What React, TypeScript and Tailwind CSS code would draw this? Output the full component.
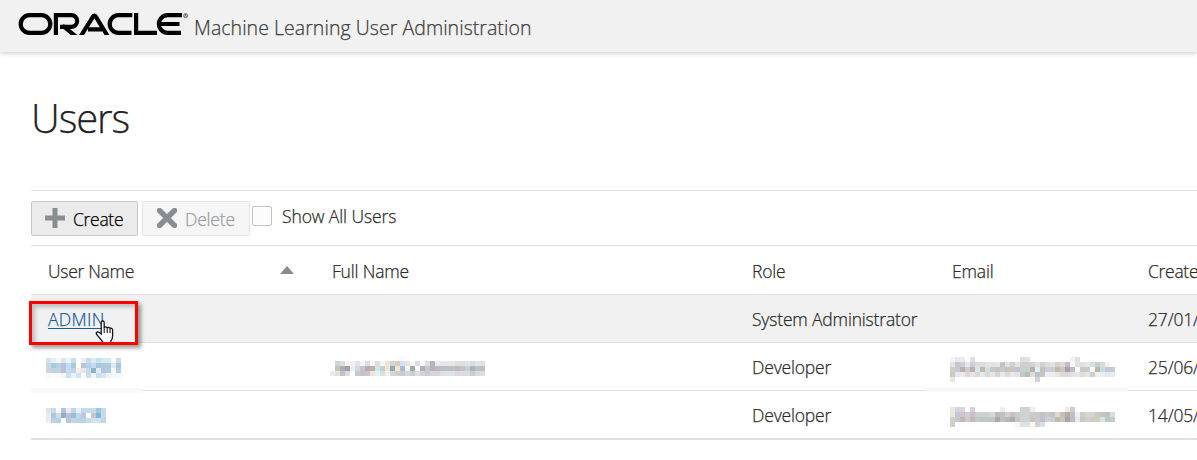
import React from "react";

const hidden = {
  userA: [
    "d8e2ea dff1fa fbf4f2 d8e6ee eaf6fa d0dde9 ffffff f0eaf0 c9dbe9 dcebf4 c4dff0 d8e8f0 d8e8f0 f8fcfc c9dde9",
    "cdd5e2 a4cbe0 b4d2e2 bdbfd8 bfdff2 a9c8dc fffff2 bfbfda b4d0e8 bfdcee a9c6dc b0c8dc b0c8dc dceaf0 a9c8de",
    "cdd3e0 c2d2e0 c0d2dc bfbfd8 bfdff2 c4d4e2 f2efeb e4e8f0 d0d8e8 8fb2d0 e4ecf2 b0c8dc b0cce0 fafafa b0cfe4",
    "f6f8fa fafcfc f8f8fa f0f6f8 cfe0ec e4f4fc d4e4ee fafcfa cadeea ecf6fa cadeea d8e4ee e8f4fa f4f8fc f4f8fc",
  ],
  userB: [
    "dce6ec c8dce6 f2fcfc b0c4da f0e8ec c2d4e2 e0f2fc c0d8e8 c8dae6 c8dae6 9cc8e0 c4dcea",
    "eaeaf2 acc8de d8dae6 88b0cc b8c0da 9cbcd4 bcd8ea c0c4dc ffffff c0c8d4 84b4d2 c4dcea",
    "eaeef2 c0d0e2 b0d2e6 ffffff bcc4da c4d4e4 b4d6ea bcd4e6 c8dcea dce0ea c8e4f2 c4d6e4",
  ],
  name: [
    "- - - - - - - - - - - - - fafcfe f4faff - - - - - - - - - - - - - - - -",
    "- ccd6d4 dddddc f5f5f5 f0f2f4 e2e4e8 f2f4fc e0dedc f4f6fa dde0e4 f4f6f6 f2e2d0 cbd7e2 d8cfb8 d0e4f4 e4e4e0 fcfcfc dedce0 fafafa e0e0e4 b9b3b8 e8eaec e4e6e8 e4e8ec e4e6e8 e0dfde e0dfde e0e4e6 d8dce0 e0e4e8 e0e0e2",
    "- c4c4b0 a6b0bb ac9ea8 ebeeee cdd9e6 c5c5c4 b4adb5 c0b09c cce5f1 c5d0d0 f2e2d0 93a6b5 f0e7ce a9bcc9 f8fafa 9ea9a8 ffffff b0b0b6 c5c8d4 b9b3b8 bbb9bd b9bfc4 b9bfc4 b9bfc4 c1bbbc c1c2c5 c9d0cf adb4c0 bec2c8 bfbfc1",
    "ebebe8 e0e0dc c2c2c5 dddbe0 - c6c9cc c5c5c4 c9c6cc efe5d9 e0f2fa dce1de f7eee6 ccd7de cecfcc c8cccf d8d8d8 c9cfcd e0e0e0 d4d4d8 c8cdd6 dbd5d7 d8d3d8 dde1e1 dfe2e2 dfe2e2 dcd8dc e0d9df d8ddd9 c8ccd2 dadade dddde0",
  ],
  emailA: [
    "f5f5f5 e9e9ed eaeaf0 - e0e0e4 - - - - - - - - - dde0dd e0e1e1 - - - - - - - - f5efee e0e0e0 - - - - - - -",
    "e1e3e1 c4c7d0 cdced6 e6e6e9 cdced6 dadddd dddddb e0e5e2 e2e2e2 e7e3e4 b9c9bf e3dfe0 cecfd4 e5e5dc cdd0d0 cdd1d0 d4d3d3 e0e1e5 d2d2d6 d5dfdc e2e2e6 d5d1cf dfd8d6 bcbdc5 - e0e3dd e0e3dc e5e5ea dedddb c5d0cd d5dadd eef1f5 -",
    "cbd0c7 c7c8d1 bdaeb2 c9cdd8 c0b0a4 d2e5f1 c5b9ae cfdeeb c4c9c5 cdc0c1 bdd0c7 cdc1bd cbc4bb bdc4d2 ccd0cd c5d2cb bdaead dff0f8 c5bfbd d0cce0 c5d1cf c5b9ad c5c7c4 aca0a3 bbbcca - c8cac8 ccc9cc fafdff beb7a5 c5dbdc c5c5d7 c5cdc6",
    "c7ccc5 e6e5ec ebe9eb d9d9de e6e4e7 d7d8d6 e8e8e8 d7d8d4 e8e4e5 d8d4d6 ebe9e7 dfdbdc e9e9e9 e2e2e8 c5c8bf b9bcc1 dddddd bec3c1 c5c6cc f0eff4 eeede8 eae5df dadbd8 e0d6d8 e1e1e5 e4e5e8 e1dddc e6e5e5 cdced1 efefeb e9eeee e7e8ef e7eae8",
    "e5e7e4 - - - - - - - - - - - - - - - fcf7f3 d0d1d4 - - - - - - - - - - - - - - -",
  ],
  emailB: [
    "e7e9e5 d2d5dc dcd6dc - d1d2da - - - - - ebeeeb - - fcfdfd d2d3d4 cfd3d1 eeeeec - - - - - - f3eae7 cfcfd3 - - - - - - - -",
    "e6e7e1 c4c7d1 d1c4ce cbd1d9 cbbfc1 c9d2d2 d0d1ca cbd1cf d7d7dc c3b8be b7c4ba d6cfcf c9c0c3 c9cdd4 cdd3d1 cdd3d1 d0cac8 c4c9d2 bec3c4 cdc6cb b9c5c7 dbdad2 c8bcb4 b7aaa9 bebfca eef0f0 cfcdca d7d6d3 d5d2d6 cccbba bdc7c8 bec2c6 d6ddde",
    "cdd0c6 c8c9d0 c0b6bd c9cdd2 c4bab9 c2cbcc bdc8c4 c1c8ca bec6cd b1a6a8 b7c5bc bcb5b9 acacb1 c3c6cc d0d3ce ccd4cf cfc3bf cfcac8 bec2c8 d1cbdc c5d1cf c6b6a9 c6c4c9 b0a1a1 b9b9c8 e5e9e8 c5c8c5 d1cecf cbcbd0 d0cdb9 d3e4e2 c1c6cb c5cbc5",
    "cdd0c9 - - - - - - - - - - - - f5f5f5 dce0e0 e0e1e3 fdf8f0 d0d1d4 dadee4 - - - - - - - - - - - - - -",
  ],
};

function Mosaic({ rows, className }: { rows: string[]; className: string }) {
  const cells = rows.map((r) => r.split(" "));
  const w = Math.max(...cells.map((r) => r.length)) * 5;
  const h = cells.length * 5;
  return (
    <svg className={className} width={w} height={h} viewBox={`0 0 ${w} ${h}`} shapeRendering="crispEdges" aria-hidden="true">
      {cells.flatMap((row, y) =>
        row.map((c, x) => (c === "-" ? null : <rect key={`${x}-${y}`} x={x * 5} y={y * 5} width="5" height="5" fill={`#${c}`} />)),
      )}
    </svg>
  );
}

function Logo() {
  return (
    <svg className="mt-[10px] ml-[18px] shrink-0" width="172" height="28" viewBox="18 10 172 28" fill="none" stroke="#000" strokeWidth="4.2" role="img" aria-label="Oracle">
      <clipPath id="band">
        <rect x="18" y="13" width="172" height="22" />
      </clipPath>
      <g clipPath="url(#band)">
        <path d="M29.6 15.1H41.4a8.9 8.9 0 0 1 0 17.8H29.6a8.9 8.9 0 0 1 0-17.8Z" />
        <path d="M55.9 36V15.1H71.2a5.9 5.9 0 0 1 0 11.8H60" />
        <path d="M62.5 25.5L76.5 37" />
        <path d="M80.3 37L93 16.6Q94.4 14.4 95.8 16.6L108.2 37M88 29.3H102" />
        <path d="M132.3 15.1H118.6a8.9 8.9 0 0 0 0 17.8H131.5" />
        <path d="M136.1 13V32.9H157" />
        <path d="M182 15.1H167.8a8.9 8.9 0 0 0 0 17.8H181M160 24H179.5" />
      </g>
      <g strokeWidth="0.7" stroke="#333">
        <circle cx="185.6" cy="15.6" r="2" />
        <path d="M185 17v-2.6h1q.8.6 0 1.2h-1m.8 0l.7 1.2" strokeWidth="0.5" />
      </g>
    </svg>
  );
}

const cols = "grid grid-cols-[284px_420px_200px_196px_49px] pl-[17px]";

export default function App() {
  return (
    <div className="h-[460px] w-full overflow-hidden bg-white font-['Open_Sans','Noto_Sans',sans-serif] text-[17.5px] font-light tracking-[-0.17px] text-[#2b2b2b] [-webkit-text-stroke:0.25px]">
      <header className="flex h-[52px] items-start bg-[#f1f1f1] shadow-[0_1px_5px_rgba(0,0,0,0.22)]">
        <Logo />
        <span className="mt-[14px] ml-[4px] text-[19.5px] leading-[28px] tracking-[0.05px] whitespace-nowrap text-[#404040]">Machine Learning User Administration</span>
      </header>
      <main className="ml-[31px]">
        <h1 className="h-[138px] pt-[39px] text-[40px] leading-[54px] font-light tracking-[-1.1px] text-[#222]">Users</h1>
        <div className="flex h-[56px] items-start border-y border-[#dfdfdf] pt-[10px]">
          <button className="flex h-[35px] w-[107px] items-center rounded-[2px] border border-[#c4c8cb] bg-[#ebebeb] pl-[13px] text-black">
            <svg className="-mt-[2px]" width="20" height="20" viewBox="0 0 20 20"><path d="M10 0v20M0 10h20" stroke="#878f93" strokeWidth="5" /></svg>
            <span className="mt-[2px] ml-[8px] tracking-[-0.3px]">Create</span>
          </button>
          <button className="ml-1 flex h-[35px] w-[108px] items-center rounded-[2px] border border-[#e3e5e6] bg-[#f6f6f6] pl-[14px] text-[#9c9ea3]">
            <svg className="-mt-[2px]" width="20" height="20" viewBox="0 0 20 20"><path d="M2.5 2.5l15 15M17.5 2.5l-15 15" stroke="#878f93" strokeWidth="5.4" strokeLinecap="round" /></svg>
            <span className="mt-[2px] ml-[8px] tracking-[-0.2px]">Delete</span>
          </button>
          <span className="mt-[5px] ml-[2px] size-5 rounded-[2px] border border-[#c4c4c4] bg-[#fcfcfc]" />
          <span className="mt-[3px] ml-[10px] leading-6 tracking-[-0.1px]">Show All Users</span>
        </div>
        <div className="w-[1166px]">
          <div className={`${cols} h-[49px] items-center border-b border-[#dfdfdf] pt-[2px]`}>
            <span className="flex items-center tracking-[-0.3px]">
              User Name
              <svg className="ml-auto mr-[38px] -mt-[2px]" width="14" height="8" viewBox="0 0 14 8"><path d="M0 8L7 0L14 8Z" fill="#8b8b8b" /></svg>
            </span>
            <span>Full Name</span>
            <span>Role</span>
            <span>Email</span>
            <span className="tracking-[-0.3px]">Create</span>
          </div>
          <div className={`${cols} relative h-[48px] items-center border-b border-[#dfdfdf] bg-[#f1f1f1] pt-[2px]`}>
            <a className="justify-self-start tracking-[0.35px] text-[#145c9c] underline decoration-1 underline-offset-2">ADMIN</a>
            <span />
            <span>System Administrator</span>
            <span />
            <span>27/01/</span>
            <svg className="absolute top-[25px] left-[64px] z-10" width="22" height="24" viewBox="0 0 22 24">
              <path d="M6.2 14V2.5Q6.2 1 7.7 1T9.2 2.5V8Q9.4 6.8 10.7 6.8T12.2 8.2Q12.5 7.2 13.8 7.4T15 8.9Q15.4 8 16.5 8.4T17.6 10V16Q17.6 19 15.8 21V24H7.5V21.5L1.5 14.2Q.8 12.2 2.4 11.8Q4 11.7 6.2 14Z" fill="white" stroke="#17171f" strokeWidth="1.3" />
              <path d="M9.2 7.5V13M12.2 8V13M15 9V13" stroke="#17171f" strokeWidth="1.1" />
            </svg>
            <div className="absolute top-[6px] left-[-2px] z-20 h-[44px] w-[109px] border-[3px] border-[#fe0000] shadow-[3px_3px_4px_rgba(0,0,0,0.4),inset_3px_3px_4px_rgba(0,0,0,0.22)]" />
          </div>
          <div className={`${cols} relative h-[48px] items-center border-b border-[#dfdfdf] pt-[2px]`}>
            <Mosaic rows={hidden.userA} className="absolute top-[15px] left-[15px]" />
            <Mosaic rows={hidden.name} className="absolute top-[13px] left-[299px]" />
            <span className="col-start-3">Developer</span>
            <Mosaic rows={hidden.emailA} className="absolute top-[14px] left-[919px]" />
            <span className="col-start-5">25/06/</span>
            <span className="absolute top-[45px] left-0 h-[5px] w-[112px] bg-[#f8fafa]" />
            <span className="absolute top-[44px] left-[896px] h-[5px] w-[201px] bg-[#f8fafa]" />
          </div>
          <div className={`${cols} relative h-[49px] items-center border-b-2 border-[#dfdfdf] pt-[2px]`}>
            <Mosaic rows={hidden.userB} className="absolute top-[17px] left-[15px]" />
            <span className="col-start-3">Developer</span>
            <Mosaic rows={hidden.emailB} className="absolute top-[16px] left-[919px]" />
            <span className="col-start-5">14/05/</span>
          </div>
        </div>
      </main>
    </div>
  );
}
